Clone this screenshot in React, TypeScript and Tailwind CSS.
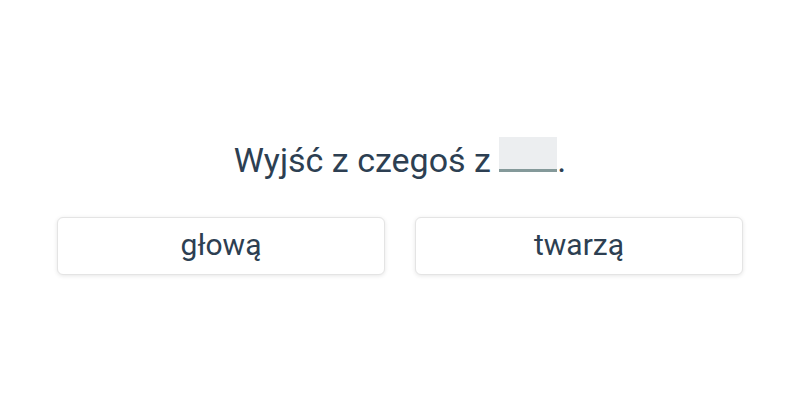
export default function App() {
  return (
    <div
      className="w-[800px] h-[400px] bg-white flex flex-col items-center pt-[136px] text-[#2d3f52]"
      style={{ fontFamily: 'Roboto, "Noto Sans", sans-serif' }}
    >
      <div className="text-[34px] leading-[48px] text-center">
        Wyjść z czegoś z{" "}
        <span className="inline-block align-baseline w-[58px] h-[35px] bg-[#eceef0] border-b-[3px] border-[#84999a]"></span>
        .
      </div>
      <div className="mt-[33px] w-[800px] px-[57px] grid grid-cols-2 gap-[30px]">
        <button className="h-[58px] pb-[3px] bg-white border border-[#e4e4e4] rounded-[6px] shadow-[0_1px_4px_rgba(0,0,0,0.1)] text-[30px] text-[#2d3f52]">
          głową
        </button>
        <button className="h-[58px] pb-[3px] bg-white border border-[#e4e4e4] rounded-[6px] shadow-[0_1px_4px_rgba(0,0,0,0.1)] text-[30px] text-[#2d3f52]">
          twarzą
        </button>
      </div>
    </div>
  );
}
